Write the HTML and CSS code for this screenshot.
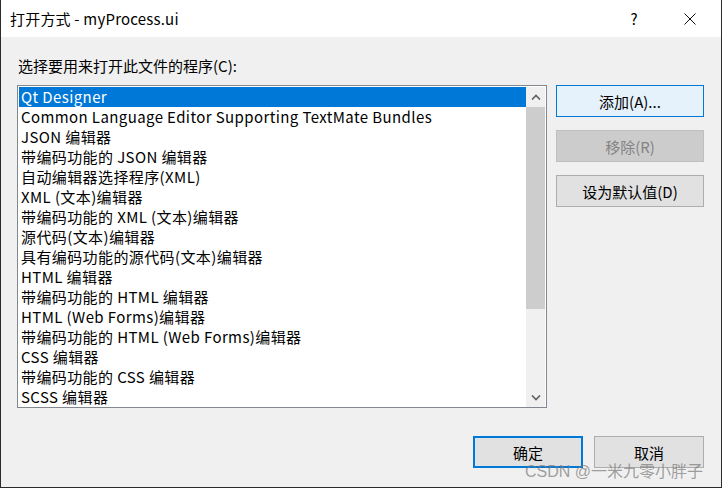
FILE: index.html
```html
<!DOCTYPE html>
<html lang="zh-CN">
<head>
<meta charset="utf-8">
<link rel="stylesheet" href="styles.css">
</head>
<body>
<div class="window">
  <div class="titlebar">
    <span class="title">打开方式 - myProcess.ui</span>
    <span class="tb-btn help">?</span>
    <span class="tb-btn close">
      <svg width="12" height="12" viewBox="0 0 12 12"><path d="M0.5 0.5 L11.5 11.5 M11.5 0.5 L0.5 11.5" stroke="#111" stroke-width="1" fill="none"/></svg>
    </span>
  </div>
  <div class="content">
    <div class="label">选择要用来打开此文件的程序(C):</div>
    <div class="main">
      <div class="listbox">
        <div class="rows">
          <div class="row selected">Qt Designer</div>
          <div class="row">Common Language Editor Supporting TextMate Bundles</div>
          <div class="row">JSON 编辑器</div>
          <div class="row">带编码功能的 JSON 编辑器</div>
          <div class="row">自动编辑器选择程序(XML)</div>
          <div class="row">XML (文本)编辑器</div>
          <div class="row">带编码功能的 XML (文本)编辑器</div>
          <div class="row">源代码(文本)编辑器</div>
          <div class="row">具有编码功能的源代码(文本)编辑器</div>
          <div class="row">HTML 编辑器</div>
          <div class="row">带编码功能的 HTML 编辑器</div>
          <div class="row">HTML (Web Forms)编辑器</div>
          <div class="row">带编码功能的 HTML (Web Forms)编辑器</div>
          <div class="row">CSS 编辑器</div>
          <div class="row">带编码功能的 CSS 编辑器</div>
          <div class="row">SCSS 编辑器</div>
        </div>
        <div class="scrollbar">
          <div class="arrow">
            <svg width="10" height="6" viewBox="0 0 10 6"><path d="M1 5.5 L5 1.5 L9 5.5" stroke="#606060" stroke-width="1.6" fill="none"/></svg>
          </div>
          <div class="track">
            <div class="thumb"></div>
          </div>
          <div class="arrow">
            <svg width="10" height="6" viewBox="0 0 10 6"><path d="M1 0.5 L5 4.5 L9 0.5" stroke="#606060" stroke-width="1.6" fill="none"/></svg>
          </div>
        </div>
      </div>
      <div class="side">
        <button class="btn focus-light">添加(A)...</button>
        <button class="btn disabled">移除(R)</button>
        <button class="btn">设为默认值(D)</button>
      </div>
    </div>
    <div class="footer">
      <button class="btn wide default">确定</button>
      <button class="btn wide cancel">取消</button>
    </div>
  </div>
  <div class="watermark">CSDN @一米九零小胖子</div>
</div>
</body>
</html>
```

FILE: styles.css
```css
* { box-sizing: border-box; }
html, body { margin: 0; padding: 0; }
body {
  width: 722px;
  height: 488px;
  overflow: hidden;
  font-family: "Noto Sans CJK SC", "Noto Sans", sans-serif;
  color: #000;
}
.window {
  position: relative;
  width: 722px;
  height: 488px;
  border-left: 1px solid #2b2b2b;
  border-right: 1px solid #2b2b2b;
  border-bottom: 1px solid #2b2b2b;
  background: #f0f0f0;
  display: flex;
  flex-direction: column;
}
.titlebar {
  height: 37px;
  background: #fff;
  display: flex;
  align-items: center;
  padding-left: 9px;
}
.title {
  font-size: 15px;
  letter-spacing: 0.2px;
  flex: 1;
}
.tb-btn {
  width: 46px;
  height: 37px;
  display: flex;
  align-items: center;
  justify-content: center;
  font-size: 15px;
}
.help { margin-right: 10px; }
.close { margin-right: 8px; }
.content {
  flex: 1;
  padding: 0 17px 0 16px;
  display: flex;
  flex-direction: column;
}
.label {
  font-size: 15px;
  height: 20px;
  line-height: 20px;
  margin-top: 19px;
  padding-left: 1px;
}
.main {
  display: flex;
  margin-top: 9px;
}
.listbox {
  width: 530px;
  height: 323px;
  border: 1px solid #828790;
  background: #fff;
  padding: 1px 1px 0 1px;
  display: flex;
  overflow: hidden;
}
.rows {
  flex: 1;
  padding-top: 0;
}
.row {
  height: 20px;
  line-height: 20px;
  font-size: 15px;
  letter-spacing: 0.4px;
  padding-left: 2px;
  white-space: nowrap;
}
.row.selected {
  background: #0078d7;
  color: #fff;
}
.scrollbar {
  width: 19px;
  background: #f0f0f0;
  display: flex;
  flex-direction: column;
}
.arrow {
  height: 19px;
  display: flex;
  align-items: center;
  justify-content: center;
}
.track { flex: 1; }
.thumb {
  height: 202px;
  background: #cdcdcd;
  margin-top: 1px;
}
.side {
  display: flex;
  flex-direction: column;
  gap: 13px;
  margin-left: 9px;
}
.btn {
  width: 148px;
  height: 32px;
  font-family: "Noto Sans CJK SC", "Noto Sans", sans-serif;
  font-size: 15px;
  background: #e1e1e1;
  border: 1px solid #adadad;
  color: #000;
  padding: 0;
  margin: 0;
}
.btn.focus-light {
  background: #e5f1fb;
  border-color: #0078d7;
}
.btn.disabled {
  background: #cccccc;
  border-color: #bfbfbf;
  color: #838383;
}
.footer {
  display: flex;
  justify-content: flex-end;
  gap: 11px;
  margin-top: 28px;
}
.btn.wide { width: 110px; }
.btn.default {
  border: 2px solid #0078d7;
}
.watermark {
  position: absolute;
  left: 524px;
  top: 458px;
  font-family: "Liberation Sans", "Noto Sans CJK SC", sans-serif;
  font-size: 16px;
  color: rgba(120, 120, 120, 0.7);
  white-space: nowrap;
}
```
